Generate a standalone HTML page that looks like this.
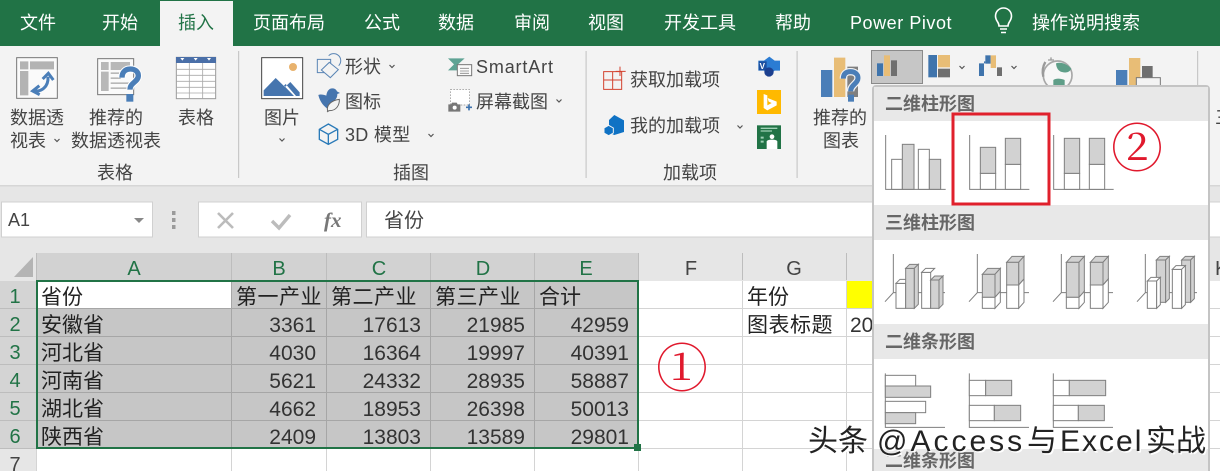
<!DOCTYPE html>
<html lang="zh"><head><meta charset="utf-8"><title>Excel</title>
<style>
html,body{margin:0;padding:0;background:#fff;width:1220px;height:471px;overflow:hidden}
svg{display:block}
text{font-family:"Liberation Sans","Noto Sans CJK SC",sans-serif;white-space:pre}
.tab{font-size:18px;fill:#fff}
.r{font-size:18px;fill:#444}
.c{font-size:21px;fill:#222}
.n{font-size:21px;fill:#333;text-anchor:end}
.h{font-size:20px;fill:#217346;text-anchor:middle}
.h2{font-size:20px;fill:#444;text-anchor:middle}
.m{font-size:18px;font-weight:700;fill:#666}
.chev{fill:none;stroke:#555;stroke-width:1.2}
.mini rect,.mini polygon{stroke:#7f7f7f;stroke-width:3}
.w{fill:#fff}.g{fill:#d2d2d2}
.ax{stroke:#7f7f7f;stroke-width:3;fill:none}
.wm{font-size:30px}
</style></head><body>
<svg width="1220" height="471" viewBox="0 0 1220 471" xmlns="http://www.w3.org/2000/svg">
<!-- title tabs -->
<rect width="1220" height="46" fill="#217346"/>
<rect x="160" y="1" width="73" height="45" fill="#f3f3f3"/>
<rect y="46" width="1220" height="139" fill="#f3f3f3"/>
<rect y="185" width="1220" height="68" fill="#e6e6e6"/>
<rect y="185" width="1220" height="1.5" fill="#d6d6d6"/>
<text class="tab" x="20" y="29">文件</text>
<text class="tab" x="102" y="29">开始</text>
<text class="tab" x="178" y="29" style="fill:#217346">插入</text>
<text class="tab" x="253" y="29">页面布局</text>
<text class="tab" x="364" y="29">公式</text>
<text class="tab" x="438" y="29">数据</text>
<text class="tab" x="514" y="29">审阅</text>
<text class="tab" x="588" y="29">视图</text>
<text class="tab" x="664" y="29">开发工具</text>
<text class="tab" x="775" y="29">帮助</text>
<text class="tab" x="850" y="29" style="letter-spacing:.55px">Power Pivot</text>
<text class="tab" x="1032" y="29">操作说明搜索</text>
<g fill="none" stroke="#fff" stroke-width="1.6"><path d="M999 26c0-4-3.500-5-3.500-10a8 8 0 0 1 16 0c0 5-3.500 6-3.500 10z"/><path d="M1000 29h7M1001 32.500h5"/></g>
<!-- ribbon separators -->
<g fill="#c8c8c8"><rect x="238" y="51" width="1.200" height="127"/><rect x="585.500" y="51" width="1.200" height="127"/><rect x="796.500" y="51" width="1.200" height="127"/><rect x="1197" y="51" width="1.200" height="40"/></g>
<!-- ribbon text -->
<text class="r" x="10" y="124">数据透</text><text class="r" x="10" y="147">视表</text>
<text class="r" x="89" y="124">推荐的</text><text class="r" x="71" y="147">数据透视表</text>
<text class="r" x="178" y="124">表格</text><text class="r" x="97" y="179">表格</text>
<text class="r" x="264" y="124">图片</text>
<text class="r" x="345" y="73">形状</text><text class="r" x="345" y="108">图标</text>
<text class="r" x="345" y="141" style="letter-spacing:.3px">3D 模型</text><text class="r" x="393" y="179">插图</text>
<text class="r" x="476" y="73" style="letter-spacing:.85px">SmartArt</text><text class="r" x="476" y="108">屏幕截图</text>
<text class="r" x="630" y="86">获取加载项</text><text class="r" x="630" y="132">我的加载项</text><text class="r" x="663" y="179">加载项</text>
<text class="r" x="813" y="124">推荐的</text><text class="r" x="823" y="147">图表</text>
<text class="r" x="1215" y="124">三</text>
<g class="chev"><path d="M54.500 139l2.500 2.500 2.500-2.500"/><path d="M279.500 138.500l2.500 2.500 2.500-2.500"/><path d="M389.500 65l2.500 2.500 2.500-2.500"/><path d="M428.500 134l2.500 2.500 2.500-2.500"/><path d="M556.500 99.500l2.500 2.500 2.500-2.500"/><path d="M737.500 125.500l2.500 2.500 2.500-2.500"/><path d="M907.500 66l2.500 2.500 2.500-2.500"/><path d="M959.500 66l2.500 2.500 2.500-2.500"/><path d="M1011.500 66l2.500 2.500 2.500-2.500"/></g>
<!-- left icons, zoom coords -->
<g transform="scale(.33333)">
<rect x="50" y="173" width="122" height="122" fill="#fafafa" stroke="#777" stroke-width="3"/>
<path d="M60 184h25v24H60zM90 184h72v24H90zM60 213h25v73H60z" fill="#b3b3b3"/>
<path d="M100 272c24 6 46-12 44-42M118 257l-20 16 21 11M128 237l17-17 15 20" fill="none" stroke="#4a7eb8" stroke-width="9"/>
<rect x="293" y="176" width="108" height="108" fill="#fafafa" stroke="#777" stroke-width="3"/>
<path d="M303 186h23v24h-23zM332 186h58v24h-58zM303 215h23v58h-23zM332 217h30v5h-30zM332 232h30v5h-30zM332 247h58v5h-58zM332 262h58v5h-58z" fill="#b8b8b8"/>
<path d="M366 233c0-18 12-26 25-26 14 0 24 8 24 20 0 19-25 20-25 42" fill="none" stroke="#fff" stroke-width="22"/>
<path d="M366 233c0-18 12-26 25-26 14 0 24 8 24 20 0 19-25 20-25 42" fill="none" stroke="#4a7eb8" stroke-width="16"/>
<rect x="379" y="282" width="21" height="23" fill="#4a7eb8"/>
<rect x="529" y="172" width="118" height="124" fill="#fff" stroke="#999" stroke-width="3"/>
<rect x="528" y="171" width="120" height="18" fill="#4a6fa8"/>
<path d="M568 189v106M608 189v106M530 208h117M530 226h117M530 244h117M530 262h117M530 279h117" stroke="#aaa" stroke-width="2.500" fill="none"/>
<path d="M541 174h12l-6 8zM581 174h12l-6 8zM621 174h12l-6 8z" fill="#fff"/>
<rect x="785" y="173" width="123" height="123" fill="#fff" stroke="#444" stroke-width="3"/>
<circle cx="879" cy="201" r="12" fill="#e8b26d"/>
<path d="M791 288v-17l36-37 28 27 16-15 28 31v11h-11l-31-36-5 5 30 31z" fill="#4675ae"/>
<g fill="none" stroke="#5a85b5" stroke-width="3"><path d="M952 178h40v40h-40z"/><path d="M986 167a21 21 0 1 1 30 30"/><path d="M988 187l27 22-24 24-27-23z" fill="#f3f3f3"/></g>
<path d="M955 285c6-3 18-1 24 2 1-10 6-22 18-22 8 0 12 4 14 9l9 5-8 3c0 10-4 17-12 22-9 3-10 13-13 25-14-8-27-22-32-44z" fill="#4675ae"/>
<path d="M983 333c-5-16 10-32 35-35 1 17-9 35-31 34l-6 4" fill="#f3f3f3" stroke="#666" stroke-width="3"/>
<path d="M985 372l28 16v30l-28 15-27-15v-30zM958 388l27 15 28-15M985 403v30" fill="none" stroke="#2a7ab8" stroke-width="4"/>
</g>
<!-- middle icons -->
<g transform="translate(420,0) scale(.33333)">
<path d="M84 175h50l-20 18 20 18H84l18-18z" fill="#5fa394"/>
<rect x="112" y="194" width="43" height="33" fill="#fafafa" stroke="#777" stroke-width="3"/>
<path d="M120 205h27M120 213h27M120 220h27" stroke="#888" stroke-width="2.500"/>
<rect x="91" y="269" width="58" height="46" fill="#fff" stroke="#888" stroke-width="2" stroke-dasharray="5 4"/>
<path d="M85 313h8l3-5h14l3 5h8v22H85z" fill="#777"/><circle cx="104" cy="323" r="6" fill="#fff"/>
<path d="M147 313v18M138 322h18" stroke="#3d72ad" stroke-width="5"/>
<path d="M551 215h54v53h-54zM578 215v53M551 240h54" fill="none" stroke="#d3422f" stroke-width="3"/>
<path d="M600 200v28M587 214h30" stroke="#d3422f" stroke-width="3"/>
<path d="M583 345l29 16v35l-29 9-16-7v-38z" fill="#0f72c4"/>
<path d="M566 376l14 8v15l-14 8-14-8v-15z" fill="#0f72c4" stroke="#f3f3f3" stroke-width="3"/>
<path d="M1048 170l16 12h16v30h-16l-16 12-16-12h-17v-30h17z" fill="#2b7cd3"/>
<path d="M1016 184h24v27h-24z" fill="#1a4fa0"/>
<circle cx="1047" cy="216" r="14" fill="#1b3f8f"/>
<text x="1019" y="207" style="font-size:24px;font-weight:700;fill:#fff">V</text>
<rect x="1011" y="270" width="72" height="72" fill="#ffb900"/>
<path d="M1031 282l11 4v30l13-7-9-4-3-11 27 11v11l-28 15-11-7z" fill="#fff"/>
<rect x="1011" y="376" width="72" height="71" fill="#217346"/>
<path d="M1022 385h50M1022 393h34" stroke="#9fd0b5" stroke-width="4"/>
<circle cx="1056" cy="410" r="7" fill="#fff"/><path d="M1040 447v-22c0-4 8-6 16-6s16 2 16 6v22z" fill="#fff"/>
<path d="M1022 410h9v6h-9zM1022 422h9v6h-9z" fill="#9fd0b5"/>
</g>
<!-- chart icons -->
<rect x="871.500" y="50.500" width="51" height="33" fill="#c6c6c6" stroke="#8a8a8a"/>
<g transform="translate(800,0) scale(.33333)">
<path d="M63 210h34v81H63z" fill="#4a7eb8"/><path d="M102 173h34v118h-34z" fill="#e8bd76"/><path d="M142 200h32v91h-32z" fill="#7f7f7f"/>
<path d="M130 236c0-15 9-21 21-21 13 0 23 7 23 19 0 17-22 20-22 40" fill="none" stroke="#f3f3f3" stroke-width="22"/>
<path d="M130 236c0-15 9-21 21-21 13 0 23 7 23 19 0 17-22 20-22 40" fill="none" stroke="#4a7eb8" stroke-width="15"/>
<rect x="144" y="284" width="18" height="21" fill="#4a7eb8"/>
<path d="M231 190h18v38h-18z" fill="#3f74ac"/><path d="M252 166h18v62h-18z" fill="#e8bd76"/><path d="M273 181h18v47h-18z" fill="#6f6f6f"/>
<path d="M385 165h26v67h-26z" fill="#3f74ac"/><path d="M414 165h36v37h-36z" fill="#e8bd76"/><path d="M414 206h36v26h-36z" fill="#6f6f6f"/>
<path d="M537 190h15v38h-15zM552 190h4v-6h-4z" fill="#3f74ac"/><path d="M556 166h16v25h-16z" fill="#3f74ac"/><path d="M572 166h16v38h-16z" fill="#e8bd76"/><path d="M591 202h15v26h-15z" fill="#6f6f6f"/>
<circle cx="773" cy="226" r="43" fill="#f7f7f7" stroke="#a8a8a8" stroke-width="5"/>
<path d="M768 190c15-5 33 2 46 16-4 10-15 14-28 10-9-2-17-10-18-26zM760 240c8-6 22-5 34 0v16h-34z" fill="#5f9e88"/>
<path d="M736 186c-8 14-10 28-6 44" fill="none" stroke="#9a9a9a" stroke-width="7"/>
<path d="M744 180h18M753 172v8" stroke="#9a9a9a" stroke-width="4"/>
<path d="M948 210h34v45h-34z" fill="#4a7eb8"/><path d="M987 174h34v81h-34z" fill="#e8bd76"/><path d="M1026 198h32v40h-32z" fill="#6f6f6f"/>
<rect x="1009" y="233" width="72" height="26" fill="#f3f3f3" stroke="#777" stroke-width="3"/>
</g>
<!-- formula bar -->
<rect x="1.500" y="202" width="151" height="35" fill="#fff" stroke="#d0d0d0"/>
<text x="8" y="226" style="font-size:18px;fill:#444">A1</text>
<path d="M134 218h10l-5 5z" fill="#888"/>
<g fill="#9a9a9a"><rect x="172" y="211" width="3.500" height="4"/><rect x="172" y="218" width="3.500" height="4"/><rect x="172" y="225" width="3.500" height="4"/></g>
<rect x="198.500" y="202" width="163" height="35" fill="#fff" stroke="#d0d0d0"/>
<rect x="366.500" y="202" width="860" height="35" fill="#fff" stroke="#d0d0d0"/>
<path d="M218 213l15 15M233 213l-15 15" stroke="#bcbcbc" stroke-width="2.600" fill="none"/>
<path d="M272 221l7 7 11-13" stroke="#bcbcbc" stroke-width="3.400" fill="none"/>
<text x="324" y="227" style="font-family:'Liberation Serif',serif;font-style:italic;font-weight:700;font-size:21px;fill:#777">fx</text>
<text x="384" y="227" style="font-size:20px;fill:#444">省份</text>
<!-- sheet -->
<rect x="0" y="253" width="1220" height="28" fill="#e6e6e6"/>
<rect x="0" y="281" width="36" height="190" fill="#e6e6e6"/>
<rect x="36" y="253" width="602" height="27" fill="#d2d2d2"/>
<rect x="0" y="281" width="36" height="168" fill="#d4d4d4"/>
<path d="M33 257v20H14z" fill="#b4b4b4"/>
<rect x="36" y="281" width="602" height="168" fill="#c6c6c6"/>
<rect x="36" y="281" width="195" height="27" fill="#fff"/>
<rect x="846" y="281" width="26" height="27" fill="#ff0"/>
<g stroke="#a6a6a6" stroke-width="1" fill="none"><path d="M36 308.500h602M36 336.500h602M36 364.500h602M36 392.500h602M36 420.500h602M231.500 281v168M326.500 281v168M430.500 281v168M534.500 281v168"/></g>
<g stroke="#d4d4d4" stroke-width="1" fill="none"><path d="M638 308.500h582M638 336.500h582M638 364.500h582M638 392.500h582M638 420.500h582M638 448.500h582M742.500 281v190M846.500 281v190M36 448.500h602M36.500 449v22M231.500 449v22M326.500 449v22M430.500 449v22M534.500 449v22M638.500 449v22"/></g>
<g stroke="#bdbdbd" stroke-width="1" fill="none"><path d="M36.500 253v27M231.500 253v27M326.500 253v27M430.500 253v27M534.500 253v27M638.500 253v27M742.500 253v27M846.500 253v27M0 308.500h36M0 336.500h36M0 364.500h36M0 392.500h36M0 420.500h36M0 448.500h36"/></g>
<text class="h" x="134" y="275">A</text><text class="h" x="279" y="275">B</text><text class="h" x="379" y="275">C</text><text class="h" x="483" y="275">D</text><text class="h" x="586" y="275">E</text>
<text class="h2" x="691" y="275">F</text><text class="h2" x="794" y="275">G</text><text x="1215" y="275" style="font-size:20px;fill:#444">K</text>
<g style="font-size:20px;fill:#217346;text-anchor:middle"><text x="15" y="303">1</text><text x="15" y="331">2</text><text x="15" y="359">3</text><text x="15" y="387">4</text><text x="15" y="415">5</text><text x="15" y="443">6</text></g>
<text class="h2" x="15" y="471">7</text>
<text class="c" x="41" y="304">省份</text><text class="c" x="41" y="332">安徽省</text><text class="c" x="41" y="360">河北省</text><text class="c" x="41" y="388">河南省</text><text class="c" x="41" y="416">湖北省</text><text class="c" x="41" y="444">陕西省</text>
<text class="c" x="236" y="304" style="letter-spacing:.5px">第一产业</text><text class="c" x="331" y="304" style="letter-spacing:.5px">第二产业</text><text class="c" x="435" y="304" style="letter-spacing:.5px">第三产业</text><text class="c" x="539" y="304">合计</text>
<text class="n" x="316" y="332">3361</text><text class="n" x="421" y="332">17613</text><text class="n" x="525" y="332">21985</text><text class="n" x="629" y="332">42959</text>
<text class="n" x="316" y="360">4030</text><text class="n" x="421" y="360">16364</text><text class="n" x="525" y="360">19997</text><text class="n" x="629" y="360">40391</text>
<text class="n" x="316" y="388">5621</text><text class="n" x="421" y="388">24332</text><text class="n" x="525" y="388">28935</text><text class="n" x="629" y="388">58887</text>
<text class="n" x="316" y="416">4662</text><text class="n" x="421" y="416">18953</text><text class="n" x="525" y="416">26398</text><text class="n" x="629" y="416">50013</text>
<text class="n" x="316" y="444">2409</text><text class="n" x="421" y="444">13803</text><text class="n" x="525" y="444">13589</text><text class="n" x="629" y="444">29801</text>
<text class="c" x="747" y="304">年份</text><text class="c" x="747" y="332" style="letter-spacing:.5px">图表标题</text>
<text class="c" x="850" y="332" style="fill:#333">2019</text>
<rect x="37" y="281" width="601" height="167" fill="none" stroke="#217346" stroke-width="2"/>
<rect x="634" y="444" width="7" height="7" fill="#217346"/>
<text x="656" y="387" style="font-family:'Noto Serif CJK SC',serif;font-size:52px;fill:#e0192d">①</text>
<!-- dropdown -->
<rect x="873" y="86" width="336" height="390" rx="3" fill="#fff" stroke="#c4c4c4" stroke-width="2"/>
<rect x="874" y="87" width="334" height="34" fill="#e8e8e8"/>
<rect x="874" y="205" width="334" height="35" fill="#e8e8e8"/>
<rect x="874" y="324" width="334" height="35" fill="#e8e8e8"/>
<rect x="874" y="449" width="334" height="22" fill="#e8e8e8"/>
<text class="m" x="885" y="110">二维柱形图</text><text class="m" x="885" y="229">三维柱形图</text><text class="m" x="885" y="348">二维条形图</text><text class="m" x="885" y="467">二维条形图</text>
<!-- 2D columns -->
<g class="mini" transform="translate(800,0) scale(.33333)">
<path class="ax" d="M257 405v163h180"/>
<rect class="w" x="275" y="478" width="32" height="90"/><rect class="g" x="307" y="433" width="35" height="135"/><rect class="w" x="355" y="448" width="33" height="120"/><rect class="g" x="388" y="478" width="34" height="90"/>
<path class="ax" d="M509 405v163h179"/>
<rect class="w" x="541" y="520" width="46" height="48"/><rect class="g" x="541" y="442" width="46" height="78"/><rect class="w" x="616" y="493" width="46" height="75"/><rect class="g" x="616" y="415" width="46" height="78"/>
<path class="ax" d="M761 405v163h180"/>
<rect class="w" x="793" y="520" width="46" height="48"/><rect class="g" x="793" y="415" width="46" height="105"/><rect class="w" x="868" y="493" width="46" height="75"/><rect class="g" x="868" y="415" width="46" height="78"/>
</g>
<rect x="953" y="114" width="96" height="90" fill="none" stroke="#e0202c" stroke-width="3"/>
<text x="1111" y="167" style="font-family:'Noto Serif CJK SC',serif;font-size:52px;fill:#e0192d">②</text>
<!-- 3D columns and bars -->
<g class="mini" transform="translate(860,230) scale(.33333)">
<path class="ax" d="M100 72v116M75 215l25-27h155"/>
<rect class="w" x="108" y="160" width="29" height="75"/><polygon class="w" points="108,160 120,148 149,148 137,160"/>
<rect class="g" x="137" y="115" width="26" height="120"/><polygon class="g" points="137,115 149,103 175,103 163,115"/><polygon class="g" points="163,115 175,103 175,223 163,235"/>
<rect class="w" x="185" y="127" width="27" height="108"/><polygon class="w" points="185,127 197,115 224,115 212,127"/>
<rect class="g" x="212" y="150" width="25" height="85"/><polygon class="g" points="212,150 224,138 249,138 237,150"/><polygon class="g" points="237,150 249,138 249,223 237,235"/>

<path class="ax" d="M352 72v116M327 215l25-27h155"/>
<polygon class="g" points="367,133 383,115 421,115 405,133"/><polygon class="g" points="405,133 421,115 421,184 405,202"/><polygon class="w" points="405,202 421,184 421,217 405,235"/>
<rect class="g" x="367" y="133" width="38" height="69"/><rect class="w" x="367" y="202" width="38" height="33"/>
<polygon class="g" points="440,97 456,79 492,79 476,97"/><polygon class="g" points="476,97 492,79 492,147 476,165"/><polygon class="w" points="476,165 492,147 492,217 476,235"/>
<rect class="g" x="440" y="97" width="36" height="68"/><rect class="w" x="440" y="165" width="36" height="70"/>

<path class="ax" d="M604 72v116M579 215l25-27h155"/>
<polygon class="g" points="619,97 635,79 673,79 657,97"/><polygon class="g" points="657,97 673,79 673,184 657,202"/><polygon class="w" points="657,202 673,184 673,217 657,235"/>
<rect class="g" x="619" y="97" width="38" height="105"/><rect class="w" x="619" y="202" width="38" height="33"/>
<polygon class="g" points="691,97 707,79 745,79 729,97"/><polygon class="g" points="729,97 745,79 745,147 729,165"/><polygon class="w" points="729,165 745,147 745,217 729,235"/>
<rect class="g" x="691" y="97" width="38" height="68"/><rect class="w" x="691" y="165" width="38" height="70"/>

<path class="ax" d="M856 72v116M831 215l25-27h155"/>
<rect class="g" x="889" y="90" width="28" height="127"/><polygon class="g" points="889,90 900,79 928,79 917,90"/><polygon class="g" points="917,90 928,79 928,206 917,217"/>
<rect class="w" x="862" y="153" width="28" height="82"/><polygon class="w" points="862,153 873,142 901,142 890,153"/><polygon class="w" points="890,153 901,142 901,224 890,235"/>
<rect class="g" x="965" y="90" width="27" height="127"/><polygon class="g" points="965,90 976,79 1003,79 992,90"/><polygon class="g" points="992,90 1003,79 1003,206 992,217"/>
<rect class="w" x="937" y="118" width="28" height="117"/><polygon class="w" points="937,118 948,107 976,107 965,118"/><polygon class="w" points="965,118 976,107 976,224 965,235"/>

<path class="ax" d="M76 430v162h179"/>
<rect class="w" x="76" y="436" width="91" height="32"/><rect class="g" x="76" y="468" width="136" height="34"/><rect class="w" x="76" y="514" width="121" height="34"/><rect class="g" x="76" y="548" width="91" height="33"/>
<path class="ax" d="M328 430v162h179"/>
<rect class="w" x="328" y="451" width="49" height="46"/><rect class="g" x="377" y="451" width="78" height="46"/><rect class="w" x="328" y="526" width="75" height="46"/><rect class="g" x="403" y="526" width="79" height="46"/>
<path class="ax" d="M580 430v162h179"/>
<rect class="w" x="580" y="451" width="48" height="46"/><rect class="g" x="628" y="451" width="109" height="46"/><rect class="w" x="580" y="526" width="75" height="46"/><rect class="g" x="655" y="526" width="78" height="46"/>
</g>
<!-- watermark -->
<g class="wm" fill="#fff" transform="translate(1.500,1.500)"><text x="808" y="451" style="fill:#fff">头条</text><text x="877" y="451" style="fill:#fff;letter-spacing:3px">@Access</text><text x="1027" y="451" style="fill:#fff">与</text><text x="1060" y="451" style="fill:#fff;letter-spacing:2px">Excel</text><text x="1146" y="451" style="fill:#fff">实战</text></g>
<g class="wm"><text x="808" y="451" style="fill:#222">头条</text><text x="877" y="451" style="fill:#222;letter-spacing:3px">@Access</text><text x="1027" y="451" style="fill:#222">与</text><text x="1060" y="451" style="fill:#222;letter-spacing:2px">Excel</text><text x="1146" y="451" style="fill:#222">实战</text></g>
</svg>
</body></html>
